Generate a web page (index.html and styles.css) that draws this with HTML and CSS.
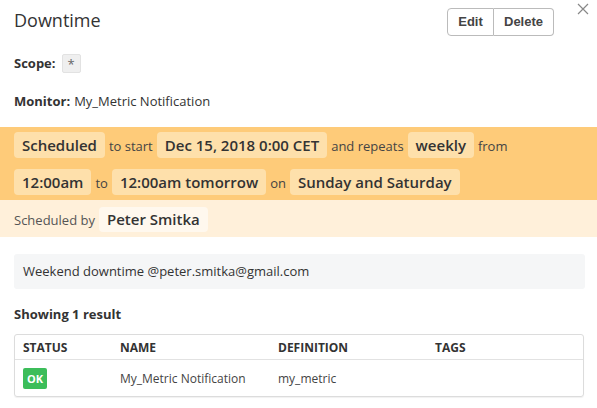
FILE: index.html
```html
<!DOCTYPE html>
<html>
<head>
<meta charset="utf-8">
<link rel="stylesheet" href="styles.css">
</head>
<body>
<div class="panel">
  <div class="header">
    <h1 class="title">Downtime</h1>
    <div class="btn-group">
      <button class="btn">Edit</button>
      <button class="btn">Delete</button>
    </div>
    <span class="close">
      <svg width="12" height="12" viewBox="0 0 12 12"><path d="M1 1L11 11M11 1L1 11" stroke="#888" stroke-width="1.2" fill="none"/></svg>
    </span>
  </div>

  <div class="field scope-row"><span class="label">Scope:</span><span class="scope-tag">*</span></div>
  <div class="field monitor-row"><span class="label">Monitor:</span><span class="monitor-name">My_Metric Notification</span></div>

  <div class="schedule">
    <div class="line">
      <span class="pill">Scheduled</span><span class="word">to start</span><span class="pill">Dec 15, 2018 0:00 CET</span><span class="word">and repeats</span><span class="pill">weekly</span><span class="word">from</span>
    </div>
    <div class="line">
      <span class="pill">12:00am</span><span class="word">to</span><span class="pill">12:00am tomorrow</span><span class="word">on</span><span class="pill">Sunday and Saturday</span>
    </div>
  </div>
  <div class="owner">
    <span class="word">Scheduled by</span><span class="pill pill-light">Peter Smitka</span>
  </div>

  <div class="note">Weekend downtime @peter.smitka@gmail.com</div>

  <div class="result-count">Showing 1 result</div>

  <div class="table">
    <div class="row head">
      <div class="c c1">STATUS</div>
      <div class="c c2">NAME</div>
      <div class="c c3">DEFINITION</div>
      <div class="c c4">TAGS</div>
    </div>
    <div class="row body-row">
      <div class="c c1"><span class="ok">OK</span></div>
      <div class="c c2">My_Metric Notification</div>
      <div class="c c3">my_metric</div>
      <div class="c c4"></div>
    </div>
  </div>
</div>
</body>
</html>
```
FILE: styles.css
```css
* { box-sizing: border-box; }
html, body { margin: 0; padding: 0; background: #fff; }
body {
  font-family: "Open Sans", "Noto Sans", sans-serif;
  color: #333;
  font-size: 13px;
}
.panel { width: 597px; height: 408px; overflow: hidden; }

.header {
  position: relative;
  display: flex;
  align-items: center;
  height: 42px;
  padding: 0 43px 0 14px;
}
.title {
  margin: 0;
  font-size: 18px;
  font-weight: 400;
  color: #333;
  flex: 1;
  line-height: 24px;
  margin-top: -2px;
}
.btn-group {
  display: flex;
  margin-top: 1px;
}
.btn {
  font-family: "Liberation Sans", Arial, sans-serif;
  font-weight: 700;
  font-size: 13px;
  color: #444;
  background: #fff;
  border: 1px solid #bbb;
  height: 28px;
  padding: 0 10px;
  margin: 0;
  cursor: pointer;
}
.btn:first-child { border-radius: 4px 0 0 4px; width: 47px; }
.btn:last-child { border-radius: 0 4px 4px 0; border-left: none; width: 60px; }
.close {
  position: absolute;
  right: 8px;
  top: 3px;
  display: block;
  width: 12px;
  height: 12px;
}
.close svg { display: block; }

.field {
  padding: 0 14px;
  display: flex;
  align-items: center;
}
.label { font-weight: 700; }
.scope-row { height: 42px; }
.scope-tag {
  display: inline-block;
  width: 19px;
  height: 19px;
  line-height: 19px;
  text-align: center;
  background: #efefef;
  border: 1px solid #e2e2e2;
  border-radius: 2px;
  color: #666;
  margin-left: 6px;
  font-size: 13px;
}
.monitor-row { height: 34px; }
.monitor-name { margin-left: 4px; }

.schedule {
  margin-top: 9px;
  background: #fecb79;
  padding: 5px 14px;
  display: flex;
  flex-direction: column;
  gap: 11px;
}
.line, .owner {
  display: flex;
  align-items: center;
  gap: 4px;
}
.pill {
  display: inline-block;
  background: #fee0ab;
  border-radius: 4px;
  font-weight: 600;
  font-size: 15px;
  height: 26px;
  line-height: 26px;
  padding: 0 8px;
  color: #333;
}
.word { font-size: 13px; color: #444; padding-top: 1px; }
.owner {
  background: #fff0da;
  padding: 7px 14px 5px;
  height: 37px;
}
.owner .word { color: #555; }
.pill-light { background: #fff8ee; height: 25px; line-height: 25px; }

.note {
  margin: 17px 12px 0 14px;
  background: #f5f6f7;
  border-radius: 3px;
  height: 35px;
  line-height: 34px;
  padding: 0 9px;
  font-size: 13px;
  color: #333;
}
.result-count {
  padding: 15px 14px 0;
  font-weight: 700;
  font-size: 13px;
  height: 45px;
  line-height: 20px;
}
.table {
  margin: 0 13px 0 14px;
  border: 1px solid #dcdcdc;
  border-radius: 3px;
  box-shadow: 0 1px 1px rgba(0,0,0,0.06);
}
.row { display: flex; align-items: center; }
.head {
  height: 25px;
  border-bottom: 1px solid #e2e2e2;
  font-weight: 700;
  font-size: 12px;
  color: #333;
}
.body-row { height: 36px; font-size: 12px; color: #444; }
.c { padding-left: 8px; }
.c1 { width: 97px; }
.c2 { width: 158px; }
.c3 { width: 157px; }
.c4 { flex: 1; }
.ok {
  display: inline-block;
  background: #3cbd5a;
  color: #fff;
  font-weight: 700;
  font-size: 11px;
  border-radius: 2px;
  width: 24px;
  height: 21px;
  line-height: 21px;
  text-align: center;
}
```
